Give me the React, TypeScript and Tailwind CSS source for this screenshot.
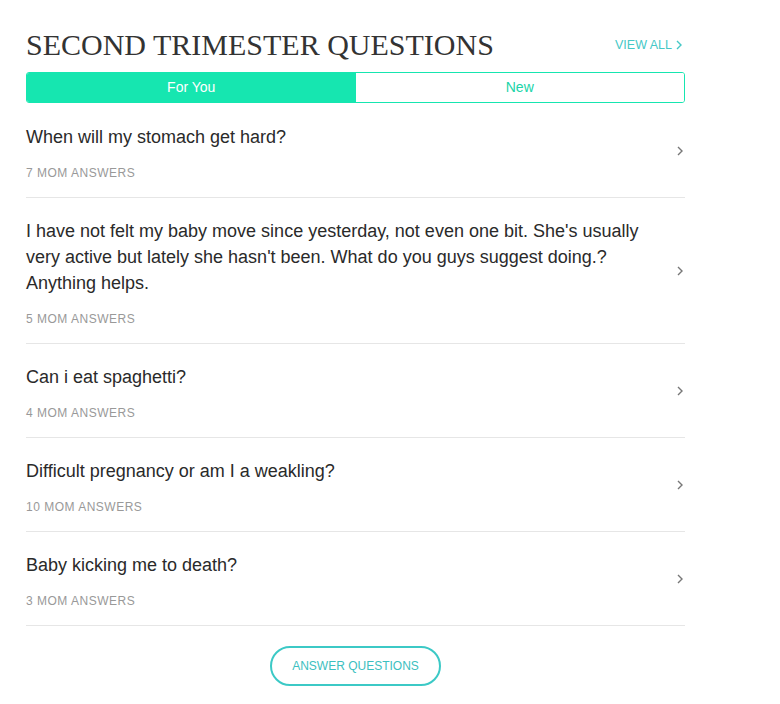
import React from 'react';

interface Question {
  id: number;
  text: string;
  answers: number;
}

const questions: Question[] = [
  { id: 1, text: 'When will my stomach get hard?', answers: 7 },
  {
    id: 2,
    text: "I have not felt my baby move since yesterday, not even one bit. She's usually very active but lately she hasn't been. What do you guys suggest doing.? Anything helps.",
    answers: 5,
  },
  { id: 3, text: 'Can i eat spaghetti?', answers: 4 },
  { id: 4, text: 'Difficult pregnancy or am I a weakling?', answers: 10 },
  { id: 5, text: 'Baby kicking me to death?', answers: 3 },
];

const Chevron: React.FC<{ className?: string }> = ({ className }) => (
  <svg className={className} viewBox="0 0 6 10" fill="none" stroke="currentColor" strokeWidth="1.4">
    <path d="M1 1l4 4-4 4" />
  </svg>
);

const App: React.FC = () => {
  return (
    <div className="w-[780px] h-[704px] bg-white font-['Liberation_Sans',Arial,sans-serif]">
      <div className="w-[659px] ml-[26px] pt-[28px]">
        <div className="flex items-center justify-between h-[34px]">
          <h2 className="font-['Liberation_Serif','Times_New_Roman',serif] text-[30px] leading-none text-[#333]">
            SECOND TRIMESTER QUESTIONS
          </h2>
          <a className="flex items-center gap-1 text-[12.5px] text-[#45c8c6] pr-[3px]">
            VIEW ALL
            <Chevron className="w-[6px] h-[10px]" />
          </a>
        </div>

        <div className="mt-[10px] flex h-[31px] rounded-[3px] border border-[#16e6b0] overflow-hidden text-[14px]">
          <button className="flex-1 bg-[#16e6b0] text-white">For You</button>
          <button className="flex-1 bg-white text-[#20d4a8]">New</button>
        </div>

        <div className="pt-[1px]">
          {questions.map((q) => (
            <div key={q.id} className="flex items-center border-b border-[#e6e6e6] pt-[20px] pb-[16px]">
              <div className="flex-1 pr-[30px]">
                <p className="text-[18px] leading-[26px] text-[#2a2a2a]">{q.text}</p>
                <p className="mt-[15px] text-[12px] leading-[16px] text-[#999] tracking-[0.5px]">
                  {q.answers} MOM ANSWERS
                </p>
              </div>
              <Chevron className="w-[6px] h-[10px] text-[#777] mr-[2px] -mt-[3px]" />
            </div>
          ))}
        </div>

        <div className="flex justify-center mt-[20px]">
          <button className="w-[171px] h-[40px] rounded-full border-2 border-[#3cc9c6] text-[12px] text-[#3cc0c0]">
            ANSWER QUESTIONS
          </button>
        </div>
      </div>
    </div>
  );
};

export default App;
